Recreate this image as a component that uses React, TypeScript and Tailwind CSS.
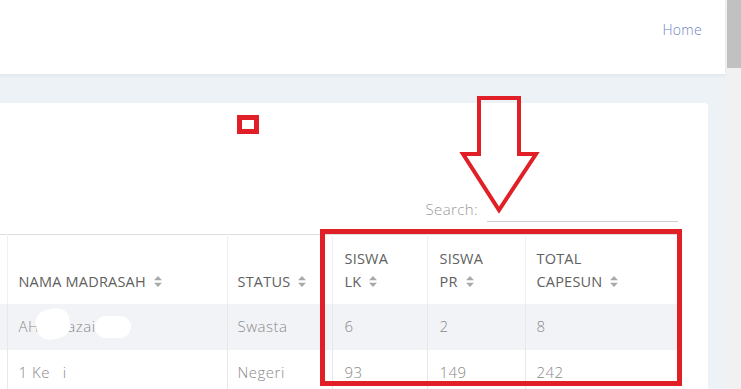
import React from 'react';

const font = { fontFamily: '"Open Sans", "Noto Sans", sans-serif' };

const SortIcon = () => (
  <svg width="8" height="11" viewBox="0 0 8 11" className="inline-block ml-[8px] -mt-[2px]">
    <path d="M4 0 L8 4.2 L0 4.2 Z" fill="#a9a9a9" />
    <path d="M4 11 L8 6.8 L0 6.8 Z" fill="#a9a9a9" />
  </svg>
);

interface Row {
  nama: React.ReactNode;
  status: string;
  lk: number;
  pr: number;
  total: number;
}

const rows: Row[] = [
  {
    nama: (
      <span className="relative inline-block">
        AHl awazaiq
        <span className="absolute left-[17px] -top-[6px] h-[30px] w-[34px] rounded-[40%] bg-white -rotate-12" />
        <span className="absolute left-[76px] top-[1px] h-[22px] w-[36px] rounded-full bg-white" />
      </span>
    ),
    status: 'Swasta',
    lk: 6,
    pr: 2,
    total: 8,
  },
  {
    nama: (
      <span className="relative inline-block">
        1 Ke  . i
        <span className="absolute left-[34px] top-[3px] h-[16px] w-[10px] rounded-full bg-white" />
      </span>
    ),
    status: 'Negeri',
    lk: 93,
    pr: 149,
    total: 242,
  },
];

const App = () => {
  return (
    <div className="flex h-[389px] w-[741px] overflow-hidden bg-[#edf2f6]" style={font}>
      <div className="relative flex flex-1 flex-col">
        <header className="flex h-[74px] shrink-0 items-start justify-end bg-white pr-[23px] pt-[19px] shadow-[0_2px_3px_rgba(0,0,0,0.05)]">
          <a className="text-[14px] font-light tracking-[0.3px] text-[#7285c4]">Home</a>
        </header>

        <main className="flex-1 pr-[17px] pt-[29px]">
          <div className="h-full rounded-tr-[4px] bg-white pr-[30px] pt-[91px]">
            <div className="mb-[12px] flex items-end justify-end">
              <label className="pb-[2px] text-[15px] font-light tracking-[0.4px] text-[#9a9a9a]">Search:</label>
              <input className="ml-[9px] h-[28px] w-[191px] border-b border-[#cfcfcf] outline-none" />
            </div>

            <table className="w-[678px] table-fixed border-collapse">
              <colgroup>
                <col className="w-[7px]" />
                <col className="w-[220px]" />
                <col className="w-[105px]" />
                <col className="w-[95px]" />
                <col className="w-[98px]" />
                <col className="w-[153px]" />
              </colgroup>
              <thead>
                <tr className="h-[69px] border-t border-[#dedede] text-left align-bottom text-[14.5px] font-medium leading-[23px] tracking-[0.2px] text-[#606060]">
                  <th className="border-r border-[#f1f1f1]" />
                  <th className="border-r border-[#f1f1f1] pb-[11px] pl-[11px] font-medium">
                    NAMA MADRASAH
                    <SortIcon />
                  </th>
                  <th className="border-r border-[#f1f1f1] pb-[11px] pl-[10px] font-medium">
                    STATUS
                    <SortIcon />
                  </th>
                  <th className="border-r border-[#f1f1f1] pb-[11px] pl-[12px] font-medium">
                    SISWA
                    <br />
                    LK
                    <SortIcon />
                  </th>
                  <th className="border-r border-[#f1f1f1] pb-[11px] pl-[12px] font-medium">
                    SISWA
                    <br />
                    PR
                    <SortIcon />
                  </th>
                  <th className="pb-[11px] pl-[11px] font-medium">
                    TOTAL
                    <br />
                    CAPESUN
                    <SortIcon />
                  </th>
                </tr>
              </thead>
              <tbody className="text-[15px] font-light tracking-[0.5px] text-[#8a8a8a]">
                {rows.map((r, i) => (
                  <tr key={i} className={`h-[46px] ${i % 2 === 0 ? 'bg-[#f2f3f6]' : 'bg-white'}`}>
                    <td className="border-r border-[#e8e8e8]" />
                    <td className="border-r border-[#e8e8e8] pl-[11px]">{r.nama}</td>
                    <td className="border-r border-[#e8e8e8] pl-[10px]">{r.status}</td>
                    <td className="border-r border-[#e8e8e8] pl-[12px]">{r.lk}</td>
                    <td className="border-r border-[#e8e8e8] pl-[12px]">{r.pr}</td>
                    <td className="pl-[11px]">{r.total}</td>
                  </tr>
                ))}
              </tbody>
            </table>
          </div>
        </main>

        {/* annotations */}
        <div className="absolute left-[237px] top-[115px] h-[19px] w-[22px] border-[5px] border-[#e11f26]" />
        <svg className="absolute left-[458px] top-[95px]" width="84" height="120" viewBox="0 0 84 120">
          <path
            d="M21 3 L61 3 L61 59 L78 59 L41 115 L5 59 L21 59 Z"
            fill="none"
            stroke="#e11f26"
            strokeWidth="4"
            strokeLinejoin="miter"
          />
        </svg>
        <div className="absolute left-[320px] top-[229px] h-[157px] w-[362px] border-[5px] border-[#e11f26]" />
      </div>

      <div className="flex w-[16px] justify-end bg-[#f1f1f1]">
        <div className="h-[68px] w-[14px] bg-[#c1c1c1]" />
      </div>
    </div>
  );
};

export default App;
